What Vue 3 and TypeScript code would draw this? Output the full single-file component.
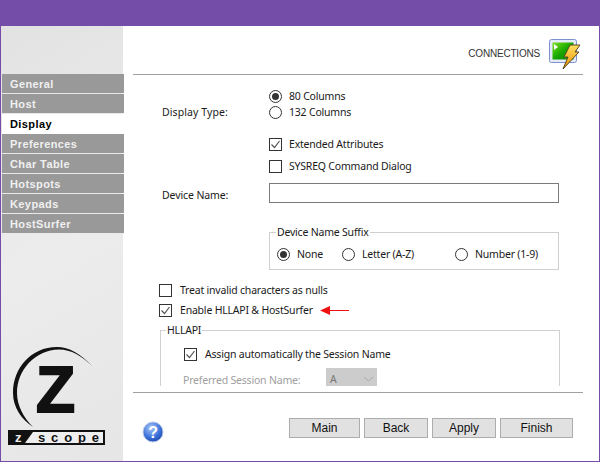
<script setup lang="ts">
const nav: string[] = ['General', 'Host', 'Display', 'Preferences', 'Char Table', 'Hotspots', 'Keypads', 'HostSurfer']
const active = 'Display'
const buttons = [
  { label: 'Main', width: 71 },
  { label: 'Back', width: 64 },
  { label: 'Apply', width: 64 },
  { label: 'Finish', width: 73 },
]
</script>

<template>
  <div class="window">
    <div class="titlebar"></div>
    <div class="body">
      <aside class="side">
        <nav class="nav">
          <div v-for="n in nav" :key="n" class="nav-item" :class="{ on: n === active }">{{ n }}</div>
        </nav>
        <svg class="logo" width="105" height="104" viewBox="0 0 105 104">
          <path d="M91 20 C80 8 68 1 56 1 C30 1 12 22 12 47 C12 61 20 73 32 81 C23 72 16 60 16 47 C16 24 34 4 58 3.5 C70 3.5 81 10 91 20 Z" fill="#111" />
          <text x="35" y="66" class="logo-z">Z</text>
          <rect x="7" y="84" width="97" height="15" fill="#111" />
          <path d="M24 97 L32 86 L102 86 L102 97Z" fill="#eee" />
          <text x="14" y="96" class="logo-sm" fill="#eee">z</text>
          <text x="37" y="96" class="logo-sm" fill="#111" textLength="61">scope</text>
        </svg>
      </aside>
      <main class="main">
        <header class="head">
          <span class="head-title">CONNECTIONS</span>
          <svg width="32" height="31" viewBox="0 0 32 31" class="head-icon">
            <defs>
              <linearGradient id="scr" x1="0" y1="0" x2="1" y2="1">
                <stop offset="0" stop-color="#7fe020" />
                <stop offset="0.5" stop-color="#17a800" />
                <stop offset="1" stop-color="#0a7a00" />
              </linearGradient>
              <linearGradient id="bolt" x1="0" y1="0" x2="0" y2="1">
                <stop offset="0" stop-color="#ffe060" />
                <stop offset="1" stop-color="#e89000" />
              </linearGradient>
            </defs>
            <rect x="0.5" y="0.5" width="27" height="23" rx="2" fill="#e4eaf8" stroke="#7d92cc" />
            <rect x="3.5" y="3.5" width="21" height="17" fill="url(#scr)" />
            <path d="M5 5 L9 8 L5 11Z" fill="#fff" />
            <path d="M21 6 L31 6 L26 13 L30 13 L14 30 L19 18 L15 18Z" fill="url(#bolt)" stroke="#5a4a20" stroke-width="1" />
          </svg>
        </header>
        <div class="content">
          <div class="row display-type">
            <span class="label">Display Type:</span>
            <div class="stack">
              <label class="opt"><i class="radio sel"></i>80 Columns</label>
              <label class="opt"><i class="radio"></i>132 Columns</label>
            </div>
          </div>
          <div class="col-controls">
            <label class="opt ext"><i class="check"><svg width="11" height="11" viewBox="0 0 11 11"><path d="M1.5 5.5 L4.5 8.5 L9.5 2" fill="none" stroke="#555" stroke-width="1.2" /></svg></i>Extended Attributes</label>
            <label class="opt sys"><i class="check"></i>SYSREQ Command Dialog</label>
          </div>
          <div class="row device">
            <span class="label">Device Name:</span>
            <input class="text-input" type="text" />
          </div>
          <fieldset class="suffix">
            <legend>Device Name Suffix</legend>
            <label class="opt o-none"><i class="radio sel"></i>None</label>
            <label class="opt o-letter"><i class="radio"></i>Letter (A-Z)</label>
            <label class="opt"><i class="radio"></i>Number (1-9)</label>
          </fieldset>
          <div class="checks">
            <label class="opt low"><i class="check"></i>Treat invalid characters as nulls</label>
            <div class="enable">
              <label class="opt low"><i class="check"><svg width="11" height="11" viewBox="0 0 11 11"><path d="M1.5 5.5 L4.5 8.5 L9.5 2" fill="none" stroke="#555" stroke-width="1.2" /></svg></i>Enable HLLAPI &amp; HostSurfer</label>
              <svg class="arrow" width="30" height="9" viewBox="0 0 30 9"><path d="M0 4.5 L10 0 L10 4 L29 4 L29 5 L10 5 L10 9Z" fill="#ee1111" /></svg>
            </div>
          </div>
          <fieldset class="hllapi">
            <legend>HLLAPI</legend>
            <label class="opt low assign"><i class="check"><svg width="11" height="11" viewBox="0 0 11 11"><path d="M1.5 5.5 L4.5 8.5 L9.5 2" fill="none" stroke="#555" stroke-width="1.2" /></svg></i>Assign automatically the Session Name</label>
            <div class="pref">
              <span class="pref-label">Preferred Session Name:</span>
              <div class="select">A<svg width="11" height="6" viewBox="0 0 11 6"><path d="M1 1 L5.5 5 L10 1" fill="none" stroke="#aaa" /></svg></div>
            </div>
          </fieldset>
        </div>
        <footer class="foot">
          <svg class="help" width="22" height="22" viewBox="0 0 22 22">
            <defs>
              <radialGradient id="hb" cx="0.4" cy="0.3" r="0.8">
                <stop offset="0" stop-color="#a8c8f8" />
                <stop offset="0.6" stop-color="#3a6fd8" />
                <stop offset="1" stop-color="#1a3fa0" />
              </radialGradient>
            </defs>
            <circle cx="11" cy="11" r="10" fill="url(#hb)" stroke="#b8c8e8" />
            <text x="11" y="16.5" text-anchor="middle" class="help-q">?</text>
          </svg>
          <div class="btns">
            <button v-for="b in buttons" :key="b.label" class="btn" :style="{ width: b.width + 'px' }">{{ b.label }}</button>
          </div>
        </footer>
      </main>
    </div>
  </div>
</template>

<style>
html, body { margin: 0; background: #fff; }
</style>

<style scoped>
.window {
  width: 600px;
  height: 462px;
  box-sizing: border-box;
  border: solid #744da9;
  border-width: 0 1px 1px 1px;
  display: flex;
  flex-direction: column;
  font-family: "Noto Sans", "Open Sans", sans-serif;
  font-size: 10.5px;
  letter-spacing: -0.2px;
  color: #1a1a1a;
  overflow: hidden;
  background: #fff;
}
.titlebar { height: 26px; background: #744da9; flex: none; }
.body { flex: 1; display: flex; min-height: 0; }
.side {
  width: 122px;
  flex: none;
  background: linear-gradient(150deg, #e2e2e2, #ececec 50%, #e6e6e6);
  display: flex;
  flex-direction: column;
  justify-content: space-between;
  padding-top: 48px;
  box-sizing: border-box;
  position: relative;
}
.nav { width: 122px; margin-left: 1px; display: flex; flex-direction: column; position: relative; z-index: 1; }
.nav-item {
  height: 19px;
  margin-bottom: 1px;
  background: #999;
  color: #f0f0f0;
  font: bold 11px/21px "Liberation Sans", sans-serif;
  letter-spacing: 0.4px;
  padding-left: 8px;
}
.nav-item.on { background: #fff; color: #000; height: 20px; margin-bottom: 0; }
.logo { display: block; margin-bottom: 11px; }
.logo-z { font: bold 64px "Liberation Sans", sans-serif; fill: #111; stroke: #111; stroke-width: 2px; }
.logo-sm { font: bold 13px "Liberation Sans", sans-serif; letter-spacing: 0; }
.main { flex: 1; min-width: 0; display: flex; flex-direction: column; padding: 0 16px 0 10px; }
.head {
  height: 49px;
  box-sizing: border-box;
  flex: none;
  border-bottom: 1px solid #a0a0a0;
  display: flex;
  align-items: flex-start;
  justify-content: flex-end;
  padding-top: 13px;
}
.head-title { font: 10px/30px "Liberation Sans", sans-serif; letter-spacing: -0.2px; color: #333; margin-right: 9px; }
.head-icon { margin-right: 2px; }
.content {
  height: 311px;
  flex: none;
  overflow: hidden;
  padding-left: 29px;
  box-sizing: border-box;
}
.opt { display: flex; align-items: center; height: 16px; line-height: 16px; white-space: nowrap; }
.radio {
  width: 11px;
  height: 11px;
  flex: none;
  border: 1px solid #333;
  border-radius: 50%;
  margin-right: 7px;
  display: flex;
  align-items: center;
  justify-content: center;
  background: #fff;
}
.radio.sel::after { content: ""; width: 7px; height: 7px; border-radius: 50%; background: #333; }
.check {
  width: 11px;
  height: 11px;
  flex: none;
  border: 1px solid #333;
  margin-right: 7px;
  background: #fff;
  display: flex;
}
.low .check { margin-right: 8px; }
.row { display: flex; }
.label { width: 107px; flex: none; letter-spacing: 0; }
.display-type { margin-top: 13px; align-items: flex-end; height: 32px; }
.display-type .label { line-height: 16px; letter-spacing: 0.1px; }
.col-controls { margin-left: 107px; margin-top: 16px; }
.sys { margin-top: 6px; }
.device { margin-top: 9px; align-items: center; }
.device .label { margin-top: 4px; letter-spacing: -0.1px; }
.text-input { width: 290px; height: 20px; box-sizing: border-box; border: 1px solid #7a7a7a; padding: 0; background: #fff; outline: none; }
.suffix {
  margin: 22px 0 0 107px;
  width: 290px;
  height: 45px;
  box-sizing: border-box;
  border: 1px solid #d0d0d0;
  padding: 0 0 0 7px;
  display: flex;
  align-items: center;
}
.suffix legend { padding: 0 1px; margin-left: -1px; line-height: 14px; }
.o-none { width: 65px; }
.o-letter { width: 113px; }
.checks { margin-top: 12px; margin-left: -3px; display: flex; flex-direction: column; gap: 4px; }
.enable { display: flex; align-items: center; }
.arrow { margin-left: 7px; }
.hllapi {
  margin: 5px 0 0 -2px;
  width: 400px;
  height: 90px;
  box-sizing: border-box;
  border: 1px solid #d0d0d0;
  padding: 0 0 0 23px;
}
.hllapi legend { padding: 0 1px; margin-left: -18px; line-height: 14px; }
.assign { margin-top: 9px; }
.pref { display: flex; align-items: center; margin-top: 6px; margin-left: -1px; }
.pref-label { width: 143px; color: #a0a0a0; margin-top: 2px; }
.select {
  width: 51px;
  height: 22px;
  box-sizing: border-box;
  background: #cccccc;
  color: #777;
  padding: 0 3px 0 4px;
  display: flex;
  align-items: center;
  justify-content: space-between;
}
.foot {
  flex: 1;
  border-top: 1px solid #a0a0a0;
  margin-top: 6px;
  display: flex;
  align-items: flex-start;
  padding-top: 25px;
}
.help { margin-left: 9px; margin-top: 3px; }
.help-q { font: bold 16px "Liberation Sans", sans-serif; fill: #fff; }
.btns { margin-left: auto; display: flex; gap: 4px; margin-right: 10px; }
.btn {
  height: 20px;
  box-sizing: border-box;
  border: 1px solid #adadad;
  background: #e1e1e1;
  font: 12px "Liberation Sans", sans-serif;
  color: #111;
  padding: 0;
}
</style>
